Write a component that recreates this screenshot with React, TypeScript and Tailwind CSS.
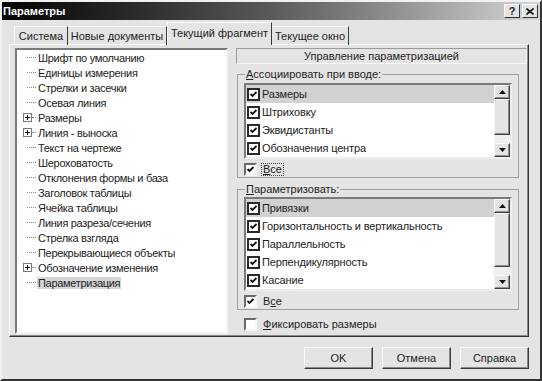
import React from 'react';

const treeItems: { label: string; plus?: boolean; selected?: boolean }[] = [
	{ label: 'Шрифт по умолчанию' },
	{ label: 'Единицы измерения' },
	{ label: 'Стрелки и засечки' },
	{ label: 'Осевая линия' },
	{ label: 'Размеры', plus: true },
	{ label: 'Линия - выноска', plus: true },
	{ label: 'Текст на чертеже' },
	{ label: 'Шероховатость' },
	{ label: 'Отклонения формы и база' },
	{ label: 'Заголовок таблицы' },
	{ label: 'Ячейка таблицы' },
	{ label: 'Линия разреза/сечения' },
	{ label: 'Стрелка взгляда' },
	{ label: 'Перекрывающиеся объекты' },
	{ label: 'Обозначение изменения', plus: true },
	{ label: 'Параметризация', selected: true },
];

const assocItems = ['Размеры', 'Штриховку', 'Эквидистанты', 'Обозначения центра'];
const paramItems = [
	'Привязки',
	'Горизонтальность и вертикальность',
	'Параллельность',
	'Перпендикулярность',
	'Касание',
];

function Check({ checked = true }: { checked?: boolean }) {
	return (
		<svg width="9" height="9" viewBox="0 0 9 9">
			{checked && (
				<polyline
					points="1.5,4 3.5,6 7.5,2"
					fill="none"
					stroke="#111"
					strokeWidth="1.8"
				/>
			)}
		</svg>
	);
}

function ListBox({ checked = true }: { checked?: boolean }) {
	return (
		<div className="flex h-[13px] w-[13px] shrink-0 items-center justify-center border-2 border-[#2a2a2a] bg-white">
			<Check checked={checked} />
		</div>
	);
}

function SunkenBox({ checked = true }: { checked?: boolean }) {
	return (
		<div className="flex h-[13px] w-[13px] shrink-0 items-center justify-center border-2 border-t-[#6a6a6a] border-l-[#6a6a6a] border-r-[#f6f6f6] border-b-[#f6f6f6] bg-white">
			<Check checked={checked} />
		</div>
	);
}

function Arrow({ up }: { up?: boolean }) {
	return (
		<div className="flex h-[14px] items-center justify-center border border-t-[#f8f8f8] border-l-[#f8f8f8] border-r-[#404040] border-b-[#404040] bg-[#e4e4e4] shadow-[inset_-1px_-1px_0_#909090]">
			<svg width="7" height="4" viewBox="0 0 7 4">
				<polygon points={up ? '3.5,0 7,4 0,4' : '0,0 7,0 3.5,4'} fill="#111" />
			</svg>
		</div>
	);
}

function CheckList({
	items,
	thumb,
}: {
	items: string[];
	thumb: string;
}) {
	return (
		<div className="ml-[6px] mr-[6px] flex border-2 border-t-[#7a7a7a] border-l-[#7a7a7a] border-r-[#eeeeee] border-b-[#eeeeee] bg-white">
			<div className="flex flex-1 flex-col">
				{items.map((item, i) => (
					<div
						key={item}
						className={`flex h-[18px] items-center pl-[1px] ${i === 0 ? 'bg-[#d2d2d2]' : ''}`}
					>
						<ListBox />
						<span className="ml-[2px] tracking-[-0.15px]">{item}</span>
					</div>
				))}
			</div>
			<div className="flex w-[16px] flex-col bg-[#efefef]">
				<Arrow up />
				<div
					className={`${thumb} border border-t-[#f8f8f8] border-l-[#f8f8f8] border-r-[#404040] border-b-[#404040] bg-[#e4e4e4] shadow-[inset_-1px_-1px_0_#909090]`}
				/>
				<div className="flex-1" />
				<Arrow />
			</div>
		</div>
	);
}

function Button({ children }: { children: React.ReactNode }) {
	return (
		<div className="flex h-[22px] w-[69px] items-center justify-center border border-t-[#fafafa] border-l-[#fafafa] border-r-[#3a3a3a] border-b-[#3a3a3a] shadow-[inset_-1px_-1px_0_#8a8a8a]">
			{children}
		</div>
	);
}

export default function App() {
	return (
		<div className="flex h-[381px] w-[542px] flex-col border-2 border-t-[#f2f2f2] border-l-[#f2f2f2] border-r-[#333] border-b-[#333] bg-[#e4e4e4] font-['Liberation_Sans',Arial,sans-serif] text-[11px] leading-[13px] text-[#222]">
			{/* title bar */}
			<div className="flex h-[18px] items-center justify-between bg-gradient-to-r from-[#050505] via-[#5a5a5a] to-[#d6d6d6] pl-[1px] pr-[2px]">
				<span className="font-bold text-white">Параметры</span>
				<div className="flex gap-[2px]">
					<div className="flex h-[14px] w-[16px] items-center justify-center border border-t-[#fafafa] border-l-[#fafafa] border-r-[#333] border-b-[#333] bg-[#e4e4e4] text-[11px] font-bold">
						?
					</div>
					<div className="flex h-[14px] w-[16px] items-center justify-center border border-t-[#fafafa] border-l-[#fafafa] border-r-[#333] border-b-[#333] bg-[#e4e4e4]">
						<svg width="8" height="7" viewBox="0 0 8 7">
							<path d="M0.5 0.5 L7.5 6.5 M7.5 0.5 L0.5 6.5" stroke="#111" strokeWidth="1.6" />
						</svg>
					</div>
				</div>
			</div>

			{/* tabs */}
			<div className="relative z-10 flex h-[24px] items-end pl-[12px]">
				<div className="-mb-px flex h-[19px] w-[54px] items-center justify-center border-t border-l border-r border-t-[#fafafa] border-l-[#fafafa] border-r-[#3a3a3a]">
					Система
				</div>
				<div className="-mb-px flex h-[19px] w-[99px] items-center justify-center border-t border-r border-t-[#fafafa] border-r-[#3a3a3a]">
					Новые документы
				</div>
				<div className="-mb-px flex h-[23px] w-[105px] items-center justify-center border-t border-l border-r border-t-[#fafafa] border-l-[#fafafa] border-r-[#3a3a3a] bg-[#e4e4e4] pb-[1px]">
					Текущий фрагмент
				</div>
				<div className="-mb-px flex h-[19px] w-[77px] items-center justify-center border-t border-r border-t-[#fafafa] border-r-[#3a3a3a]">
					Текущее окно
				</div>
			</div>

			{/* tab panel */}
			<div className="ml-[7px] flex h-[293px] w-[520px] border border-t-[#fafafa] border-l-[#fafafa] border-r-[#333] border-b-[#333] shadow-[inset_-1px_-1px_0_#8a8a8a] pl-[5px] pt-[3px]">
				{/* tree */}
				<div className="flex h-[286px] w-[213px] flex-col border-2 border-t-[#7a7a7a] border-l-[#7a7a7a] border-r-[#f4f4f4] border-b-[#f4f4f4] bg-white">
					{treeItems.map((item) => (
						<div key={item.label} className="flex h-[15px] items-center">
							<div className="flex w-[20px] shrink-0 items-center">
								{item.plus ? (
									<>
										<svg width="9" height="9" viewBox="0 0 9 9" className="ml-[6px]">
											<rect x="0.5" y="0.5" width="8" height="8" fill="#fff" stroke="#7a7a7a" />
											<path d="M2 4.5 H7 M4.5 2 V7" stroke="#111" />
										</svg>
										<div className="w-[4px] border-t border-dotted border-[#8a8a8a]" />
									</>
								) : (
									<div className="ml-[10px] w-[9px] border-t border-dotted border-[#8a8a8a]" />
								)}
							</div>
							<span
								className={`px-[1px] leading-[12px] tracking-[-0.3px] ${item.selected ? 'bg-[#d6d6d6]' : ''}`}
							>
								{item.label}
							</span>
						</div>
					))}
				</div>

				{/* right column */}
				<div className="ml-[8px] flex w-[291px] flex-col">
					<div className="flex h-[16px] items-center justify-center border border-t-[#9a9a9a] border-l-[#9a9a9a] border-r-[#f8f8f8] border-b-[#f8f8f8]">
						Управление параметризацией
					</div>

					<fieldset className="ml-[1px] mt-[4px] w-[282px] border border-[#a0a0a0] pb-[1px]">
						<legend className="ml-[7px] px-[1px]">
							<span className="underline">А</span>ссоциировать при вводе:
						</legend>
						<div className="mt-[2px]">
							<CheckList items={assocItems} thumb="h-[36px]" />
						</div>
						<div className="ml-[6px] mt-[3px] flex h-[14px] items-center">
							<SunkenBox />
							<span className="ml-[4px] border border-dotted border-[#444] px-[1px] leading-[11px]">
								<span className="underline">В</span>се
							</span>
						</div>
					</fieldset>

					<fieldset className="ml-[1px] mt-[5px] w-[282px] border border-[#a0a0a0] pb-[1px]">
						<legend className="ml-[7px] px-[1px]">
							<span className="underline">П</span>араметризовать:
						</legend>
						<div className="mt-[1px]">
							<CheckList items={paramItems} thumb="h-[54px]" />
						</div>
						<div className="ml-[6px] mt-[3px] flex h-[14px] items-center">
							<SunkenBox />
							<span className="ml-[6px]">
								В<span className="underline">с</span>е
							</span>
						</div>
					</fieldset>

					<div className="ml-[8px] mt-[7px] flex h-[14px] items-center">
						<SunkenBox checked={false} />
						<span className="ml-[6px]">
							<span className="underline">Ф</span>иксировать размеры
						</span>
					</div>
				</div>
			</div>

			{/* buttons */}
			<div className="mt-[10px] flex justify-end gap-[9px] pr-[11px]">
				<Button>OK</Button>
				<Button>Отмена</Button>
				<Button>Справка</Button>
			</div>
		</div>
	);
}
